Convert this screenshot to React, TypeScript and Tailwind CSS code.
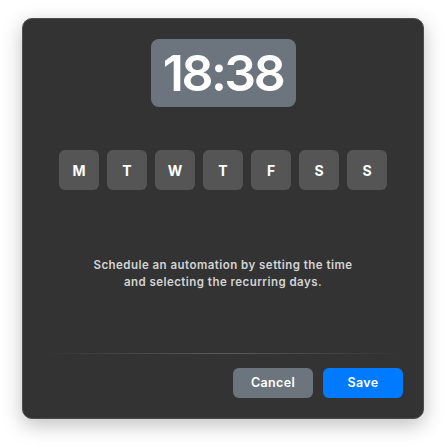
import { useState } from "react";

const days = ["M", "T", "W", "T", "F", "S", "S"];

export default function App() {
  const [active, setActive] = useState<number[]>([]);

  const toggle = (i: number) =>
    setActive((a) => (a.includes(i) ? a.filter((x) => x !== i) : [...a, i]));

  return (
    <main className="h-[446px] w-[446px] bg-white pl-[22px] pt-[18px] font-['Inter',sans-serif]">
      <div className="flex h-[401px] w-[402px] flex-col items-center rounded-[10px] border border-[#4d4d4d] bg-[#333333] shadow-[0_6px_20px_rgba(0,0,0,0.25)]">
        <div className="mt-[20px] flex h-[68px] w-[145px] items-center justify-center rounded-lg bg-[#6c757d]">
          <span className="text-[50px] font-semibold leading-none tracking-[-0.05em] text-white">
            18:38
          </span>
        </div>

        <div className="mt-[43px] flex gap-2">
          {days.map((d, i) => (
            <button
              key={i}
              onClick={() => toggle(i)}
              className={
                "flex h-10 w-10 items-center justify-center rounded-md text-[14px] font-bold text-white " +
                (active.includes(i) ? "bg-[#007bff]" : "bg-[#555555]")
              }
            >
              {d}
            </button>
          ))}
        </div>

        <p className="mt-[67px] text-center text-[11.5px] font-semibold leading-[17px] tracking-[0.04em] text-[#d4d4d4]">
          Schedule an automation by setting the time
          <br />
          and selecting the recurring days.
        </p>

        <div className="mt-[62px] h-px w-[361px] bg-gradient-to-r from-transparent via-[#5a5a5a] to-transparent" />

        <div className="mt-[14px] flex w-full justify-end gap-[10px] pr-[20px]">
          <button className="h-[30px] w-20 rounded-md bg-[#6c757d] text-[12.5px] font-semibold tracking-[0.03em] text-white">
            Cancel
          </button>
          <button className="h-[30px] w-20 rounded-md bg-[#007bff] text-[12.5px] font-semibold tracking-[0.03em] text-white">
            Save
          </button>
        </div>
      </div>
    </main>
  );
}
